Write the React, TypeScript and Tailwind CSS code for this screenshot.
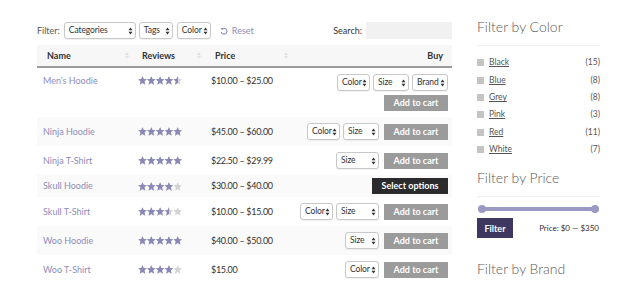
import { FC } from 'react';

const Arrows: FC = () => (
  <svg width="5" height="8" viewBox="0 0 5 8" className="shrink-0">
    <path d="M0.5 3.2 L2.5 0.5 L4.5 3.2 Z M0.5 4.8 L2.5 7.5 L4.5 4.8 Z" fill="#333" />
  </svg>
);

const Select: FC<{ label: string; w: string }> = ({ label, w }) => (
  <div className={`${w} h-[17px] shrink-0 flex items-center justify-between pl-[4px] pr-[2px] border border-[#c8c8c8] rounded-[3px] bg-white text-[8.5px] tracking-[-0.1px] text-[#333] shadow-[0_1px_1px_rgba(0,0,0,0.06)]`}>
    <span>{label}</span>
    <Arrows />
  </div>
);

const SortIcon: FC = () => (
  <svg width="4" height="7" viewBox="0 0 4 7">
    <path d="M0 3 L2 0 L4 3 Z M0 4 L2 7 L4 4 Z" fill="#e2e2e2" />
  </svg>
);

const StarRow: FC<{ fill: string }> = ({ fill }) => (
  <svg width="44" height="9" viewBox="0 0 44 9" className="block">
    {[0, 1, 2, 3, 4].map((i) => (
      <path
        key={i}
        transform={`translate(${i * 8.8} 0) scale(0.9)`}
        d="M5 0.2 L6.4 3.3 L9.8 3.6 L7.2 5.9 L8 9.6 L5 7.7 L2 9.6 L2.8 5.9 L0.2 3.6 L3.6 3.3 Z"
        fill={fill}
      />
    ))}
  </svg>
);

const Stars: FC<{ rating: number }> = ({ rating }) => (
  <div className="relative w-[44px] h-[9px]">
    <StarRow fill="#d3d3d6" />
    <div className="absolute left-0 top-0 h-[9px] overflow-hidden" style={{ width: `${(rating / 5) * 44}px` }}>
      <StarRow fill="#8a88b8" />
    </div>
  </div>
);

const AddToCart: FC = () => (
  <div className="w-[64px] h-[16px] shrink-0 flex items-center justify-center bg-[#9b9b9b] text-white text-[9px] font-bold">Add to cart</div>
);

type Row = { name: string; rating: number; price: string; selects: [string, string][]; kind: 'cart' | 'wrap' | 'options' };

const rows: Row[] = [
  { name: "Men’s Hoodie", rating: 4.6, price: '$10.00 – $25.00', selects: [['Color', 'w-[33px]'], ['Size', 'w-[36px]'], ['Brand', 'w-[36px]']], kind: 'wrap' },
  { name: 'Ninja Hoodie', rating: 5, price: '$45.00 – $60.00', selects: [['Color', 'w-[33px]'], ['Size', 'w-[36px]']], kind: 'cart' },
  { name: 'Ninja T-Shirt', rating: 5, price: '$22.50 – $29.99', selects: [['Size', 'w-[43px]']], kind: 'cart' },
  { name: 'Skull Hoodie', rating: 4, price: '$30.00 – $40.00', selects: [], kind: 'options' },
  { name: 'Skull T-Shirt', rating: 3.5, price: '$10.00 – $15.00', selects: [['Color', 'w-[33px]'], ['Size', 'w-[43px]']], kind: 'cart' },
  { name: 'Woo Hoodie', rating: 5, price: '$40.00 – $50.00', selects: [['Size', 'w-[34px]']], kind: 'cart' },
  { name: 'Woo T-Shirt', rating: 4, price: '$15.00', selects: [['Color', 'w-[34px]']], kind: 'cart' },
];

const colors: [string, string][] = [
  ['Black', '(15)'],
  ['Blue', '(8)'],
  ['Grey', '(8)'],
  ['Pink', '(3)'],
  ['Red', '(11)'],
  ['White', '(7)'],
];

const App: FC = () => {
  return (
    <div className="w-[640px] h-[284px] overflow-hidden bg-white flex items-start font-['Lato',sans-serif] text-[#333]">
      <div className="w-[415px] ml-[37px] pt-[22px] flex flex-col shrink-0">
        <div className="flex items-center h-[17px] shrink-0 text-[9px]">
          <span className="text-[#555] mr-[4px]">Filter:</span>
          <Select label="Categories" w="w-[72px]" />
          <div className="w-[3px]" />
          <Select label="Tags" w="w-[34px]" />
          <div className="w-[4px]" />
          <Select label="Color" w="w-[34px]" />
          <div className="ml-[9px] flex items-center gap-[4px] text-[#8d8bba]">
            <svg width="8" height="8" viewBox="0 0 10 10">
              <path d="M2.2 3.2 A3.6 3.6 0 1 1 1.6 6" fill="none" stroke="#8d8bba" strokeWidth="1.3" />
              <path d="M0.6 1.2 L2.6 3.8 L4.6 1.8 Z" fill="#8d8bba" />
            </svg>
            <span>Reset</span>
          </div>
          <span className="ml-auto mr-[4px] text-[#333]">Search:</span>
          <div className="w-[86px] h-[17px] bg-[#f1f1f1]" />
        </div>

        <div className="mt-[6px] h-[23px] shrink-0 bg-[#f7f7f7] border-b-2 border-[#9a9a9a] grid grid-cols-[96px_72px_87px_1fr] items-center text-[9px] font-bold text-[#333]">
          <div className="flex items-center justify-between pl-[10px] pr-[4px]"><span>Name</span><SortIcon /></div>
          <div className="flex items-center justify-between pl-[9px] pr-[4px]"><span>Reviews</span><SortIcon /></div>
          <div className="flex items-center justify-between pl-[10px] pr-[4px]"><span>Price</span><SortIcon /></div>
          <div className="text-right pr-[9px]">Buy</div>
        </div>

        {rows.map((r, i) => (
          <div
            key={r.name}
            className={`grid grid-cols-[96px_72px_87px_1fr] shrink-0 text-[9px] ${r.kind === 'options' ? 'py-[3px]' : 'py-[6px]'} ${i % 2 === 1 ? 'bg-[#fafafa]' : 'bg-white'}`}
          >
            <div className={`pl-[6px] text-[#8e8bb9] flex items-center ${r.kind === 'wrap' ? 'h-[13px]' : ''}`}>{r.name}</div>
            <div className={`pl-[5px] flex items-center ${r.kind === 'wrap' ? 'h-[13px]' : ''}`}><Stars rating={r.rating} /></div>
            <div className={`pl-[6px] text-[#333] tracking-[-0.3px] flex items-center ${r.kind === 'wrap' ? 'h-[13px]' : ''}`}>{r.price}</div>
            <div className="pr-[4px] flex flex-col items-end gap-[4px]">
              {r.kind === 'options' ? (
                <div className="w-[76px] h-[16px] flex items-center justify-center bg-[#2b2b2d] text-white text-[9px] font-bold">Select options</div>
              ) : (
                <div className="flex items-center gap-[3px]">
                  {r.selects.map(([l, w]) => (
                    <Select key={l} label={l} w={w} />
                  ))}
                  {r.kind === 'cart' && <div className="ml-[2px]"><AddToCart /></div>}
                </div>
              )}
              {r.kind === 'wrap' && <AddToCart />}
            </div>
          </div>
        ))}
      </div>

      <div className="w-[123px] ml-[25px] pt-[18px] flex flex-col text-[#555]">
        <div className="text-[14px] font-light leading-[18px] text-[#5a5a5a]">Filter by Color</div>
        <div className="mt-[9px] border-t border-[#efefef]" />
        <div className="mt-[8px] flex flex-col">
          {colors.map(([c, n]) => (
            <div key={c} className="h-[17.4px] flex items-center text-[8.5px]">
              <div className="w-[7px] h-[7px] bg-[#c4c4c4] mr-[5px]" />
              <span className="underline text-[#555]">{c}</span>
              <span className="ml-auto">{n}</span>
            </div>
          ))}
        </div>
        <div className="mt-[11px] text-[14px] font-light leading-[18px] text-[#5a5a5a]">Filter by Price</div>
        <div className="mt-[9px] border-t border-[#efefef]" />
        <div className="mt-[8px] relative h-[8px] mx-[1px]">
          <div className="absolute left-[3px] right-[3px] top-[2px] h-[4px] bg-[#9a99c4]" />
          <div className="absolute left-0 top-0 w-[8px] h-[8px] rounded-full bg-[#9a99c4]" />
          <div className="absolute right-0 top-0 w-[8px] h-[8px] rounded-full bg-[#9a99c4]" />
        </div>
        <div className="mt-[5px] flex items-center justify-between">
          <div className="w-[36px] h-[20px] flex items-center justify-center bg-[#3e3760] text-white text-[9px] font-bold">Filter</div>
          <span className="text-[8px] text-[#333] mr-[1px]">Price: $0 — $350</span>
        </div>
        <div className="mt-[22px] text-[14px] font-light leading-[18px] text-[#5a5a5a]">Filter by Brand</div>
      </div>
    </div>
  );
};

export default App;
